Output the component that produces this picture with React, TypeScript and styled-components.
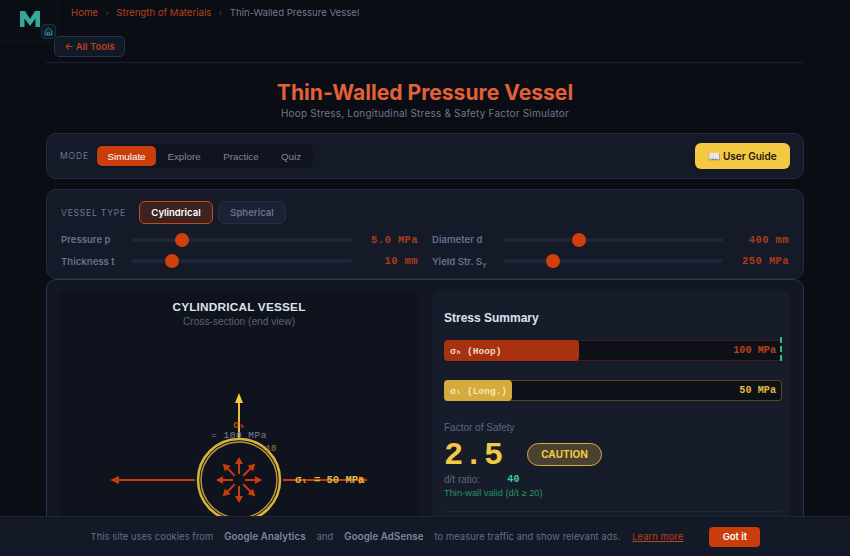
import React from 'react';
import styled, { createGlobalStyle } from 'styled-components';

const GlobalStyle = createGlobalStyle`
  html, body {
    margin: 0;
    height: 100%;
    overflow: hidden;
    background: #0a0d13;
    font-family: Inter, "Liberation Sans", sans-serif;
  }
  * { box-sizing: border-box; }
`;

const colors = {
  orange: '#c93d0c',
  orangeText: '#b8401a',
  title: '#e2603a',
  yellow: '#f5c842',
  muted: '#6f7690',
  panel: '#151a29',
  dark: '#0f131d',
  border: '#232a40',
  green: '#2fbf7f',
};

const Page = styled.div`
  position: relative;
  height: 556px;
  overflow: hidden;
  padding-left: 46px;
  padding-right: 46px;
`;

const LogoBox = styled.div`
  position: absolute;
  left: 0;
  top: 0;
  width: 58px;
  height: 42px;
  border-right: 1px solid #12161f;
  border-bottom: 1px solid #12161f;
`;

const HomeBadge = styled.div`
  position: absolute;
  left: 41px;
  top: 24px;
  width: 15px;
  height: 15px;
  border-radius: 4px;
  background: #0e1a24;
  border: 1px solid #17303c;
  display: flex;
  align-items: center;
  justify-content: center;
  color: #3a9fb5;
`;

const Breadcrumb = styled.nav`
  height: 24px;
  padding-left: 25px;
  display: flex;
  align-items: center;
  gap: 7.5px;
  font-size: 9.6px;
  color: #70778f;
`;

const Crumb = styled.span`
  color: ${colors.orangeText};
`;

const Sep = styled.span`
  color: #3e4456;
  font-size: 9px;
`;

const BackRow = styled.div`
  height: 39px;
  padding-top: 14px;
  padding-left: 8px;
  border-bottom: 1px solid #1b2030;
`;

const BackButton = styled.button`
  display: block;
  width: 71px;
  height: 21px;
  margin-top: -2px;
  padding: 0;
  border-radius: 5px;
  background: #121926;
  border: 1px solid #25334f;
  color: ${colors.orangeText};
  font-family: inherit;
  font-size: 9.5px;
  font-weight: 600;
`;

const Header = styled.header`
  height: 70px;
  padding-top: 15px;
  text-align: center;
`;

const Title = styled.h1`
  margin: 0;
  font-size: 21.1px;
  line-height: 29px;
  font-weight: 700;
  color: ${colors.title};
`;

const Subtitle = styled.p`
  margin: 0;
  font-size: 10px;
  line-height: 13px;
  letter-spacing: 0.2px;
  color: #70778f;
`;

const Card = styled.section`
  background: ${colors.panel};
  border: 1px solid ${colors.border};
  border-radius: 10px;
`;

const ModeCard = styled(Card)`
  height: 46px;
  padding: 0 13px 0 13px;
  display: flex;
  align-items: center;
  justify-content: space-between;
`;

const ModeLeft = styled.div`
  display: flex;
  align-items: center;
`;

const SmallCaps = styled.span`
  font-size: 8.5px;
  letter-spacing: 0.9px;
  color: ${colors.muted};
`;

const ModeLabel = styled(SmallCaps)`
  width: 36px;
`;

const Tabs = styled.div`
  width: 217px;
  height: 24px;
  padding: 2px 1px;
  border-radius: 6px;
  background: #101420;
  display: flex;
  align-items: center;
`;

const Tab = styled.span<{ $active?: boolean; $w: number }>`
  width: ${(p) => p.$w}px;
  height: 20px;
  border-radius: 5px;
  display: flex;
  align-items: center;
  justify-content: center;
  font-family: "Liberation Sans", sans-serif;
  font-size: 9.8px;
  color: ${(p) => (p.$active ? '#fff' : '#7f869c')};
  background: ${(p) => (p.$active ? colors.orange : 'transparent')};
`;

const GuideButton = styled.button`
  width: 95px;
  height: 26px;
  padding: 0;
  border: none;
  border-radius: 6px;
  background: ${colors.yellow};
  color: #1b1710;
  font-family: inherit;
  font-size: 10px;
  font-weight: 600;
`;

const ControlsCard = styled(Card)`
  height: 90px;
  margin-top: 10px;
  padding: 11px 13px 0 14px;
`;

const TypeRow = styled.div`
  display: flex;
  align-items: center;
  height: 23px;
  gap: 5px;
  margin-bottom: 5px;
`;

const TypeLabel = styled(SmallCaps)`
  width: 73px;
  letter-spacing: 0.8px;
`;

const TypeButton = styled.button<{ $active?: boolean; $w: number }>`
  width: ${(p) => p.$w}px;
  height: 23px;
  padding: 0;
  border-radius: 6px;
  font-family: inherit;
  font-size: 9.5px;
  font-weight: 600;
  color: ${(p) => (p.$active ? '#fff' : '#6b7289')};
  background: ${(p) => (p.$active ? '#3c2320' : '#1b2236')};
  border: ${(p) => (p.$active ? '1.5px solid #c9481c' : '1px solid #262e46')};
`;

const SliderGrid = styled.div`
  display: grid;
  grid-template-columns: 357px 357px;
  column-gap: 14px;
  row-gap: 0;
`;

const SliderRow = styled.div`
  height: 21.5px;
  display: flex;
  align-items: center;
`;

const SliderLabel = styled.label`
  width: 70.5px;
  font-size: 9.6px;
  font-weight: 600;
  color: #69708a;
  sub {
    font-size: 6.5px;
    line-height: 0;
  }
`;

const Range = styled.input`
  width: 220px;
  height: 14px;
  margin: 0;
  appearance: none;
  background: transparent;
  &::-webkit-slider-runnable-track {
    height: 4px;
    border-radius: 2px;
    background: #1f2536;
  }
  &::-webkit-slider-thumb {
    appearance: none;
    width: 14px;
    height: 14px;
    margin-top: -5px;
    border-radius: 50%;
    background: #cf400d;
  }
`;

const SliderValue = styled.span`
  flex: 1;
  text-align: right;
  font-family: "Liberation Mono", monospace;
  font-size: 10.5px;
  letter-spacing: 0.4px;
  font-weight: 700;
  color: #a93c18;
`;

const MainCard = styled(Card)`
  margin-top: 0;
  height: 300px;
  padding: 11px 13px 0 12px;
  display: grid;
  grid-template-columns: 360px 358px;
  column-gap: 13px;
  align-items: start;
  background: #121723;
  border-color: #2a3350;
`;

const DiagramPanel = styled.div`
  height: 290px;
  background: ${colors.dark};
  border-radius: 8px;
  padding-top: 9px;
  text-align: center;
`;

const DiagramTitle = styled.div`
  font-family: "Liberation Sans", sans-serif;
  font-size: 11.8px;
  font-weight: 700;
  line-height: 15px;
  letter-spacing: 0.2px;
  color: #dfe2ea;
`;

const DiagramSub = styled.div`
  font-family: "Liberation Sans", sans-serif;
  font-size: 10.2px;
  line-height: 13px;
  color: #5b6277;
`;

const DiagramSvg = styled.svg`
  display: block;
  width: 360px;
  height: 232px;
  text {
    font-family: "Liberation Mono", monospace;
  }
`;

const SummaryPanel = styled.div`
  height: 290px;
  background: #171c2b;
  border-radius: 8px;
  padding: 19px 9px 0 12px;
`;

const SummaryTitle = styled.h2`
  margin: 0 0 14px;
  font-family: "Liberation Sans", sans-serif;
  font-size: 12px;
  line-height: 16px;
  font-weight: 700;
  color: #dfe2ea;
`;

const Bar = styled.div<{ $tone: string; $mb: number }>`
  position: relative;
  width: 338px;
  height: 21px;
  margin-bottom: ${(p) => p.$mb}px;
  border-radius: 4px;
  background: #0d1016;
  border: 1px solid ${(p) => p.$tone}55;
  display: flex;
  align-items: center;
  justify-content: space-between;
  padding-right: 5px;
  font-family: "Liberation Mono", monospace;
  font-size: 10.2px;
  font-weight: 700;
  color: ${(p) => p.$tone};
`;

const BarFill = styled.div<{ $tone: string; $w: number; $ink: string }>`
  width: ${(p) => p.$w}px;
  height: 21px;
  margin-left: -1px;
  padding-left: 6px;
  border-radius: 4px;
  display: flex;
  align-items: center;
  font-size: 9.5px;
  background: ${(p) => p.$tone};
  color: ${(p) => p.$ink};
`;

const LimitMark = styled.div`
  position: absolute;
  right: -1px;
  top: -4px;
  height: 24px;
  border-right: 2px dashed ${colors.green};
`;

const FosLabel = styled.div`
  font-family: "Liberation Sans", sans-serif;
  font-size: 10px;
  line-height: 14px;
  color: #5f667b;
`;

const FosRow = styled.div`
  display: flex;
  align-items: center;
  gap: 23px;
  height: 38px;
  margin-top: 1px;
`;

const FosValue = styled.span`
  font-family: "Liberation Mono", monospace;
  font-size: 32px;
  font-weight: 700;
  letter-spacing: 0.8px;
  color: ${colors.yellow};
`;

const CautionBadge = styled.span`
  width: 75px;
  height: 23px;
  margin-top: -2px;
  border-radius: 12px;
  border: 1.5px solid #d6ad3d;
  background: #4a4130;
  display: flex;
  align-items: center;
  justify-content: center;
  font-size: 10px;
  font-weight: 700;
  color: ${colors.yellow};
`;

const RatioRow = styled.div`
  display: flex;
  align-items: center;
  height: 13px;
  margin-top: -1px;
  font-family: "Liberation Sans", sans-serif;
  font-size: 10px;
  color: #5f667b;
`;

const RatioValue = styled.span`
  margin-left: 27px;
  font-family: "Liberation Mono", monospace;
  font-weight: 700;
  letter-spacing: 0.3px;
  color: #36d48b;
`;

const ValidNote = styled.div`
  margin-top: 1px;
  padding-bottom: 12px;
  border-bottom: 1px solid #20263a;
  font-family: "Liberation Sans", sans-serif;
  font-size: 9.3px;
  line-height: 12px;
  color: #23935f;
`;

const CookieBar = styled.div`
  position: absolute;
  left: 0;
  right: 0;
  bottom: 0;
  height: 40px;
  background: #141927;
  border-top: 1px solid #1d2335;
  display: flex;
  align-items: center;
  justify-content: center;
  padding-left: 1px;
  font-size: 9.3px;
  letter-spacing: 0.1px;
  color: #666d85;
`;

const CookieStrong = styled.strong`
  margin: 0 11px;
  font-size: 9.7px;
  font-weight: 600;
  color: #7f869c;
`;

const CookieLink = styled.a`
  margin-left: 12px;
  color: ${colors.orangeText};
  text-decoration: underline;
`;

const CookieButton = styled.button`
  width: 51px;
  height: 20px;
  margin-left: 26px;
  padding: 0;
  border: none;
  border-radius: 4px;
  background: ${colors.orange};
  color: #fff;
  font-family: inherit;
  font-size: 9.5px;
  font-weight: 600;
`;

const PressureArrow = ({ angle }: { angle: number }) => (
  <g transform={`rotate(${angle} 182 189)`}>
    <line x1="188" y1="189" x2="200" y2="189" stroke="#c93d0c" strokeWidth="2" />
    <path d="M205 189 L198 185 L198 193 Z" fill="#c93d0c" />
  </g>
);

const sliders = [
  { label: 'Pressure p', value: 21, text: '5.0 MPa' },
  { label: 'Diameter d', value: 33.5, text: '400 mm' },
  { label: 'Thickness t', value: 16.5, text: '10 mm' },
  { label: 'Yield Str. S', sub: 'Y', value: 21, text: '250 MPa' },
];

export default function App() {
  return (
    <Page>
      <GlobalStyle />
      <LogoBox>
        <svg width="58" height="42" viewBox="0 0 58 42">
          <path d="M20 27 L20 11 L25 11 L30 19 L35 11 L40 11 L40 27 L35.5 27 L35.5 18.5 L30 26 L24.5 18.5 L24.5 27 Z" fill="#36a79c" />
        </svg>
        <HomeBadge>
          <svg width="9" height="9" viewBox="0 0 24 24" fill="none" stroke="currentColor" strokeWidth="2.4">
            <path d="M3 11 L12 3 L21 11 V21 H3 Z" />
            <path d="M9 21 V14 H15 V21" />
          </svg>
        </HomeBadge>
      </LogoBox>

      <Breadcrumb>
        <Crumb>Home</Crumb>
        <Sep>›</Sep>
        <Crumb>Strength of Materials</Crumb>
        <Sep>›</Sep>
        <span>Thin-Walled Pressure Vessel</span>
      </Breadcrumb>

      <BackRow>
        <BackButton>← All Tools</BackButton>
      </BackRow>

      <Header>
        <Title>Thin-Walled Pressure Vessel</Title>
        <Subtitle>Hoop Stress, Longitudinal Stress &amp; Safety Factor Simulator</Subtitle>
      </Header>

      <ModeCard>
        <ModeLeft>
          <ModeLabel>MODE</ModeLabel>
          <Tabs>
            <Tab $active $w={59}>Simulate</Tab>
            <Tab $w={56}>Explore</Tab>
            <Tab $w={58}>Practice</Tab>
            <Tab $w={42}>Quiz</Tab>
          </Tabs>
        </ModeLeft>
        <GuideButton>📖 User Guide</GuideButton>
      </ModeCard>

      <ControlsCard>
        <TypeRow>
          <TypeLabel>VESSEL TYPE</TypeLabel>
          <TypeButton $active $w={74}>Cylindrical</TypeButton>
          <TypeButton $w={68}>Spherical</TypeButton>
        </TypeRow>
        <SliderGrid>
          {sliders.map((s) => (
            <SliderRow key={s.label}>
              <SliderLabel>
                {s.label}
                {s.sub && <sub>{s.sub}</sub>}
              </SliderLabel>
              <Range type="range" min={0} max={100} step={0.5} defaultValue={s.value} />
              <SliderValue>{s.text}</SliderValue>
            </SliderRow>
          ))}
        </SliderGrid>
      </ControlsCard>

      <MainCard>
        <DiagramPanel>
          <DiagramTitle>CYLINDRICAL VESSEL</DiagramTitle>
          <DiagramSub>Cross-section (end view)</DiagramSub>
          <DiagramSvg viewBox="0 0 360 232">
            <g transform="translate(-2 -37)">
              <circle cx="182" cy="189" r="41" fill="none" stroke="#d8b23c" strokeWidth="2.5" />
              <circle cx="182" cy="189" r="38" fill="none" stroke="#b3963a" strokeWidth="1.5" />
              {[0, 45, 90, 135, 180, 225, 270, 315].map((a) => (
                <PressureArrow key={a} angle={a} />
              ))}
              <line x1="182" y1="108" x2="182" y2="148" stroke="#e7c040" strokeWidth="2" />
              <path d="M182 102 L178 112 L186 112 Z" fill="#f5c842" />
              <text x="182" y="137" textAnchor="middle" fontSize="10" fontWeight="700" fill="#c23f15">σₕ</text>
              <text x="182" y="147" textAnchor="middle" fontSize="9.5" letterSpacing="0.5" fill="#7a8198">= 100 MPa</text>
              <text x="214" y="160" textAnchor="middle" fontSize="9" fill="#9c8336">10</text>
              <line x1="138" y1="189" x2="62" y2="189" stroke="#c93d0c" strokeWidth="2" />
              <path d="M53 189 L62 185 L62 193 Z" fill="#c93d0c" />
              <line x1="226" y1="189" x2="304" y2="189" stroke="#c93d0c" strokeWidth="2" />
              <path d="M311 189 L302 185 L302 193 Z" fill="#c93d0c" />
              <text x="238" y="192" fontSize="10.5" fontWeight="700" fill="#e0b93e">σₗ = 50 MPa</text>
            </g>
          </DiagramSvg>
        </DiagramPanel>

        <SummaryPanel>
          <SummaryTitle>Stress Summary</SummaryTitle>
          <Bar $tone={colors.orangeText} $mb={19}>
            <BarFill $tone="#a83210" $w={135} $ink="#f0d8cc">σₕ (Hoop)</BarFill>
            100 MPa
            <LimitMark />
          </Bar>
          <Bar $tone="#e0b93e" $mb={20}>
            <BarFill $tone="#d4ab3c" $w={68} $ink="#f5e8b8">σₗ (Long.)</BarFill>
            50 MPa
          </Bar>
          <FosLabel>Factor of Safety</FosLabel>
          <FosRow>
            <FosValue>2.5</FosValue>
            <CautionBadge>CAUTION</CautionBadge>
          </FosRow>
          <RatioRow>
            d/t ratio:
            <RatioValue>40</RatioValue>
          </RatioRow>
          <ValidNote>Thin-wall valid (d/t ≥ 20)</ValidNote>
        </SummaryPanel>
      </MainCard>

      <CookieBar>
        This site uses cookies from
        <CookieStrong>Google Analytics</CookieStrong>
        and
        <CookieStrong>Google AdSense</CookieStrong>
        to measure traffic and show relevant ads.
        <CookieLink href="#">Learn more</CookieLink>
        <CookieButton>Got it</CookieButton>
      </CookieBar>
    </Page>
  );
}
